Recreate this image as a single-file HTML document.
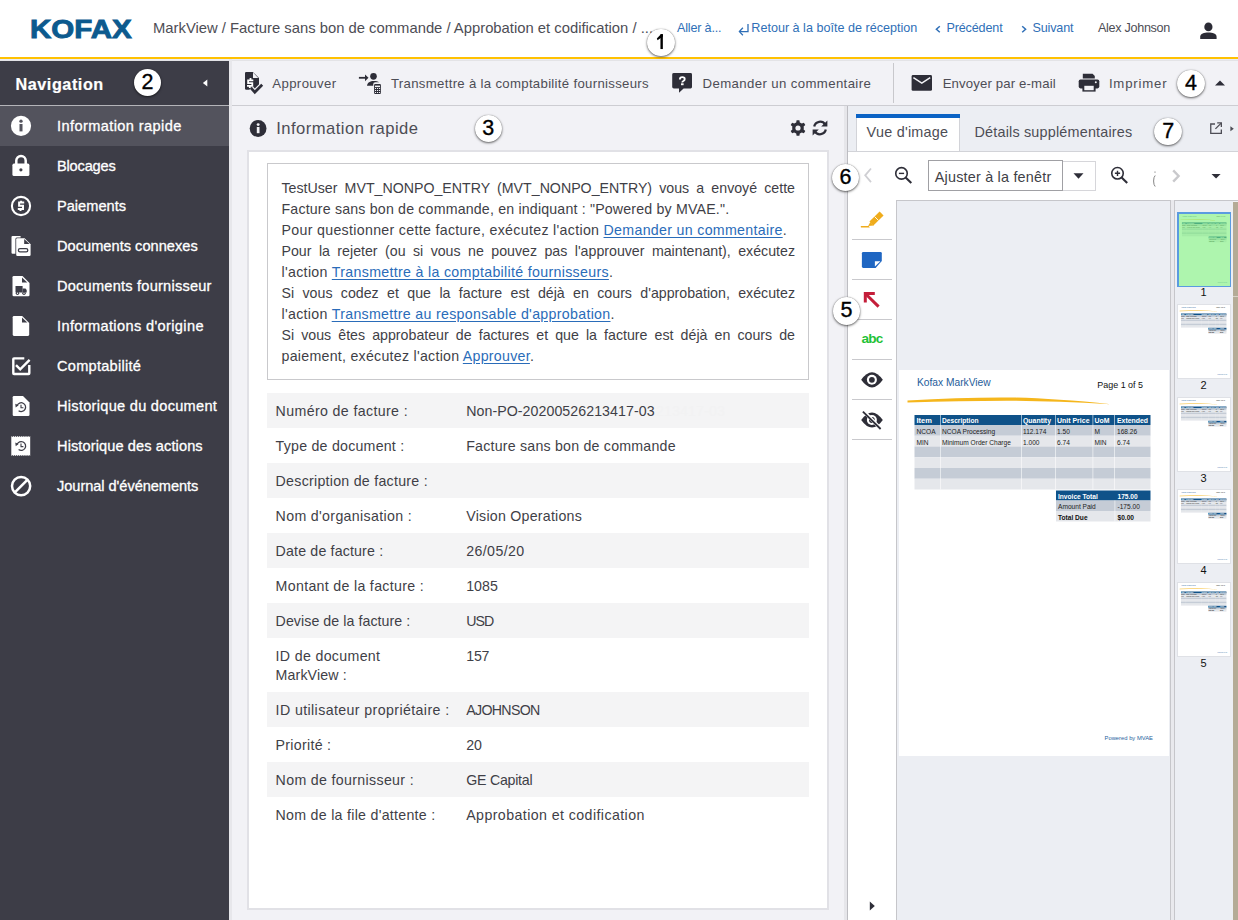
<!DOCTYPE html>
<html><head><meta charset="utf-8"><style>
html,body{margin:0;padding:0;}
body{width:1238px;height:920px;position:relative;overflow:hidden;background:#f2f2f6;font-family:"Liberation Sans", sans-serif;}
body>div{position:absolute;box-sizing:content-box;}
.t{white-space:nowrap;}
.co{background:#fff;border-radius:50%;text-align:center;font-size:21.5px;color:#000;-webkit-text-stroke:0.35px #000;box-shadow:0 1px 2.5px rgba(0,0,0,0.6), 0 0 0.8px rgba(0,0,0,0.45);}
</style></head><body>
<div style="left:0px;top:0px;width:1238px;height:57px;background:#ffffff;"></div>
<svg style="position:absolute;left:30px;top:14px;overflow:visible;" width="104" height="28" viewBox="0 0 104 28"><text x="-0.1" y="23.5" font-family="Liberation Sans" font-weight="700" font-size="26.2" fill="#0c5a8e" stroke="#0c5a8e" stroke-width="0.9" textLength="101.8" lengthAdjust="spacingAndGlyphs">KOFAX</text></svg>
<div class="t" id="t1" style="left:153px;top:20.97px;font-size:14.8px;line-height:14.8px;color:#4d4d55;font-weight:400;letter-spacing:0.003px;">MarkView / Facture sans bon de commande / Approbation et codification / ...</div>
<div class="t" id="t2" style="left:677px;top:21.63px;font-size:12.6px;line-height:12.6px;color:#2f6fb7;font-weight:400;letter-spacing:-0.179px;">Aller à...</div>
<svg style="position:absolute;left:738px;top:22px;overflow:visible;" width="12" height="15" viewBox="0 0 12 15"><path d="M10 2 V9.6 H1.8" fill="none" stroke="#2f6fb7" stroke-width="1.3"/><path d="M4.9 5.8 L1.4 9.6 L4.9 13.2" fill="none" stroke="#2f6fb7" stroke-width="1.3"/></svg>
<div class="t" id="t3" style="left:751.3px;top:21.63px;font-size:12.6px;line-height:12.6px;color:#2f6fb7;font-weight:400;letter-spacing:0.002px;">Retour à la boîte de réception</div>
<svg style="position:absolute;left:934px;top:24px;overflow:visible;" width="8" height="11" viewBox="0 0 8 11"><path d="M5.8 2.3 L2.4 5.3 L5.8 8.3" fill="none" stroke="#2f6fb7" stroke-width="1.5"/></svg>
<div class="t" id="t4" style="left:946.4px;top:21.63px;font-size:12.6px;line-height:12.6px;color:#2f6fb7;font-weight:400;letter-spacing:-0.144px;">Précédent</div>
<svg style="position:absolute;left:1020px;top:24px;overflow:visible;" width="8" height="11" viewBox="0 0 8 11"><path d="M2.2 2.3 L5.6 5.3 L2.2 8.3" fill="none" stroke="#2f6fb7" stroke-width="1.5"/></svg>
<div class="t" id="t5" style="left:1032.5px;top:21.63px;font-size:12.6px;line-height:12.6px;color:#2f6fb7;font-weight:400;letter-spacing:-0.156px;">Suivant</div>
<div class="t" id="t6" style="left:1098px;top:21.63px;font-size:12.6px;line-height:12.6px;color:#4d4d55;font-weight:400;letter-spacing:-0.298px;">Alex Johnson</div>
<svg style="position:absolute;left:1199px;top:22px;overflow:visible;" width="19" height="18" viewBox="0 0 19 18"><ellipse cx="9.4" cy="4.9" rx="4.1" ry="4.3" fill="#2b2b35"/><path d="M1.2 16.9 V14.8 C1.2 11.6 5.2 10.5 9.4 10.5 C13.6 10.5 17.6 11.6 17.6 14.8 V16.9 Z" fill="#2b2b35"/></svg>
<div style="left:0px;top:57px;width:1238px;height:2px;background:#ffc102;"></div>
<div style="left:0px;top:61px;width:229px;height:44px;background:#3d3d47;"></div>
<div class="t" id="t7" style="left:15.5px;top:75.59px;font-size:16.2px;line-height:16.2px;color:#ffffff;font-weight:700;letter-spacing:0.553px;-webkit-text-stroke:0.2px #fff;">Navigation</div>
<svg style="position:absolute;left:202px;top:79px;overflow:visible;" width="6" height="8" viewBox="0 0 6 8"><path d="M5.3 0.6 V7.6 L0.9 4.1 Z" fill="#ffffff"/></svg>
<div style="left:229px;top:59px;width:1009px;height:46px;background:#f2f2f6;"></div>
<div style="left:0px;top:59px;width:1238px;height:1px;background:#e9ecf6;"></div>
<div style="left:0px;top:60px;width:1238px;height:1px;background:#e3e3e6;"></div>
<div style="left:229px;top:59px;width:3px;height:861px;background:#e7e7eb;"></div>
<div style="left:232px;top:105px;width:1006px;height:1px;background:#cdcdd2;"></div>
<div style="left:0px;top:105px;width:229px;height:1px;background:#b4b4b9;"></div>
<svg style="position:absolute;left:240px;top:68px;overflow:visible;" width="30" height="30" viewBox="0 0 30 30"><path d="M6.2 3.9 H12.8 L19 10.1 V21.8 H6.2 Q5 21.8 5 20.6 V5.1 Q5 3.9 6.2 3.9 Z" fill="#2e2e38"/>
<path d="M13 4.6 V9.9 H18.3 Z" fill="#f2f2f6"/>
<path d="M13.3 12.3 H8.1 V15.1 H12.3 V17.9 H7 M10.5 10.1 V12.3 M9.8 17.9 V20.1" fill="none" stroke="#fff" stroke-width="1.8"/>
<path d="M11.1 20.2 L14.8 24.2 L22.2 16.8" fill="none" stroke="#f2f2f6" stroke-width="5.2"/>
<path d="M11.1 20.2 L14.8 24.2 L22.2 16.8" fill="none" stroke="#2e2e38" stroke-width="2.7"/></svg>
<div class="t" id="t8" style="left:272.3px;top:77.13px;font-size:13.2px;line-height:13.2px;color:#4d4d55;font-weight:400;letter-spacing:0.369px;">Approuver</div>
<svg style="position:absolute;left:358px;top:72px;overflow:visible;" width="24" height="23" viewBox="0 0 24 23"><path d="M0.9 5.8 H8" stroke="#2e2e38" stroke-width="1.8"/><path d="M7 2.5 L10.5 5.8 L7 9.2 Z" fill="#2e2e38"/>
<ellipse cx="15.5" cy="4.3" rx="3.3" ry="3.4" fill="#2e2e38"/>
<path d="M9 13.8 C9.4 10.5 12 9 15.8 9 C18.2 9 19.9 9.4 21.2 10.3 H17.2 Q15.2 10.3 15.2 12.3 V13.8 Z" fill="#2e2e38"/>
<rect x="16.1" y="12" width="6.8" height="10.1" rx="1" fill="#2e2e38"/>
<rect x="17" y="13.6" width="5" height="1.5" fill="#f2f2f6"/>
<g fill="#f2f2f6"><rect x="17" y="16" width="1.1" height="1"/><rect x="19" y="16" width="1.1" height="1"/><rect x="21" y="16" width="1.1" height="1"/><rect x="17" y="18" width="1.1" height="1"/><rect x="19" y="18" width="1.1" height="1"/><rect x="21" y="18" width="1.1" height="1"/><rect x="17" y="20" width="1.1" height="1"/><rect x="19" y="20" width="1.1" height="1"/><rect x="21" y="20" width="1.1" height="1"/></g></svg>
<div class="t" id="t9" style="left:391px;top:77.13px;font-size:13.2px;line-height:13.2px;color:#4d4d55;font-weight:400;letter-spacing:0.307px;">Transmettre à la comptabilité fournisseurs</div>
<svg style="position:absolute;left:668px;top:68.4px;overflow:visible;" width="30" height="30" viewBox="0 0 30 30"><path d="M5.9 5 H22.6 Q24 5 24 6.4 V19.1 Q24 20.5 22.6 20.5 H15.6 L11 24.8 V20.5 H5.9 Q4.2 20.5 4.2 19.1 V6.4 Q4.2 5 5.9 5 Z" fill="#2e2e38"/>
<path d="M11.9 11.4 Q11.9 9.1 14.3 9.1 Q16.7 9.1 16.7 11 Q16.7 12.4 15.4 13 Q14.3 13.5 14.3 14.5" fill="none" stroke="#fff" stroke-width="1.9"/>
<rect x="13" y="15.3" width="2.6" height="1.9" fill="#fff"/></svg>
<div class="t" id="t10" style="left:702.6px;top:77.13px;font-size:13.2px;line-height:13.2px;color:#4d4d55;font-weight:400;letter-spacing:0.382px;">Demander un commentaire</div>
<div style="left:893px;top:63px;width:1px;height:40px;background:#c8c8cc;"></div>
<svg style="position:absolute;left:911px;top:74px;overflow:visible;" width="22" height="18" viewBox="0 0 22 18"><rect x="0.6" y="1" width="20.4" height="15.8" rx="1.4" fill="#2e2e38"/><path d="M2.4 3.6 L10.8 9.2 L19.2 3.6" fill="none" stroke="#f2f2f6" stroke-width="1.5"/></svg>
<div class="t" id="t11" style="left:942.7px;top:77.13px;font-size:13.2px;line-height:13.2px;color:#4d4d55;font-weight:400;letter-spacing:0.133px;">Envoyer par e-mail</div>
<svg style="position:absolute;left:1078px;top:73px;overflow:visible;" width="23" height="20" viewBox="0 0 23 20"><path d="M4.8 0.7 H14.6 L16.8 2.9 V5.6 H4.8 Z" fill="#2e2e38"/>
<rect x="0.7" y="6.4" width="20.6" height="9" rx="1.8" fill="#2e2e38"/>
<rect x="4.4" y="11.4" width="13.2" height="7.2" fill="#2e2e38"/>
<rect x="6.3" y="12.8" width="9.4" height="4.4" fill="#f2f2f6"/>
<circle cx="17.8" cy="9.2" r="1" fill="#f2f2f6"/></svg>
<div class="t" id="t12" style="left:1108.9px;top:77.13px;font-size:13.2px;line-height:13.2px;color:#4d4d55;font-weight:400;letter-spacing:0.809px;">Imprimer</div>
<svg style="position:absolute;left:1214px;top:79px;overflow:visible;" width="12" height="8" viewBox="0 0 12 8"><path d="M1 6.5 L6 1.5 L11 6.5 Z" fill="#2e2e38"/></svg>
<div style="left:0px;top:106px;width:229px;height:814px;background:#3d3d47;"></div>
<div style="left:0px;top:106px;width:229px;height:40px;background:#53535d;"></div>
<div class="t" id="t13" style="left:57px;top:118.64px;font-size:14.6px;line-height:14.6px;color:#ffffff;font-weight:400;letter-spacing:0.392px;-webkit-text-stroke:0.3px #fff;">Information rapide</div>
<div class="t" id="t14" style="left:57px;top:158.64px;font-size:14.6px;line-height:14.6px;color:#ffffff;font-weight:400;letter-spacing:-0.180px;-webkit-text-stroke:0.3px #fff;">Blocages</div>
<div class="t" id="t15" style="left:57px;top:198.64px;font-size:14.6px;line-height:14.6px;color:#ffffff;font-weight:400;letter-spacing:0.006px;-webkit-text-stroke:0.3px #fff;">Paiements</div>
<div class="t" id="t16" style="left:57px;top:238.64px;font-size:14.6px;line-height:14.6px;color:#ffffff;font-weight:400;letter-spacing:0.026px;-webkit-text-stroke:0.3px #fff;">Documents connexes</div>
<div class="t" id="t17" style="left:57px;top:278.64px;font-size:14.6px;line-height:14.6px;color:#ffffff;font-weight:400;letter-spacing:0.221px;-webkit-text-stroke:0.3px #fff;">Documents fournisseur</div>
<div class="t" id="t18" style="left:57px;top:318.64px;font-size:14.6px;line-height:14.6px;color:#ffffff;font-weight:400;letter-spacing:0.355px;-webkit-text-stroke:0.3px #fff;">Informations d'origine</div>
<div class="t" id="t19" style="left:57px;top:358.64px;font-size:14.6px;line-height:14.6px;color:#ffffff;font-weight:400;letter-spacing:0.250px;-webkit-text-stroke:0.3px #fff;">Comptabilité</div>
<div class="t" id="t20" style="left:57px;top:398.64px;font-size:14.6px;line-height:14.6px;color:#ffffff;font-weight:400;letter-spacing:0.273px;-webkit-text-stroke:0.3px #fff;">Historique du document</div>
<div class="t" id="t21" style="left:57px;top:438.64px;font-size:14.6px;line-height:14.6px;color:#ffffff;font-weight:400;letter-spacing:0.098px;-webkit-text-stroke:0.3px #fff;">Historique des actions</div>
<div class="t" id="t22" style="left:57px;top:478.64px;font-size:14.6px;line-height:14.6px;color:#ffffff;font-weight:400;letter-spacing:-0.048px;-webkit-text-stroke:0.3px #fff;">Journal d'événements</div>
<svg style="position:absolute;left:10px;top:115px;overflow:visible;" width="22" height="22" viewBox="0 0 22 22"><circle cx="11" cy="10.8" r="10.1" fill="#ffffff"/><rect x="9.5" y="9" width="3" height="7.4" fill="#53535d"/><circle cx="11" cy="6.2" r="1.65" fill="#53535d"/></svg>
<svg style="position:absolute;left:12px;top:154px;overflow:visible;" width="18" height="23" viewBox="0 0 18 23"><path d="M4.3 10 V6.6 A4.7 4.7 0 0 1 13.7 6.6 V10" fill="none" stroke="#ffffff" stroke-width="2.5"/><rect x="0.4" y="9.6" width="17" height="12.5" rx="1.6" fill="#ffffff"/><circle cx="8.9" cy="15.8" r="1.6" fill="#3d3d47"/></svg>
<svg style="position:absolute;left:6px;top:190px;overflow:visible;" width="30" height="30" viewBox="0 0 30 30"><circle cx="15" cy="16" r="9.1" fill="none" stroke="#ffffff" stroke-width="2.1"/><path d="M18.2 12.6 H13.1 V15.8 H17 V19 H11.8 M15.1 10.8 V12.6 M14.5 19 V21" fill="none" stroke="#ffffff" stroke-width="2"/></svg>
<svg style="position:absolute;left:6px;top:230px;overflow:visible;" width="30" height="30" viewBox="0 0 30 30"><path d="M6.6 6 H14.6 V7.6 H10.9 Q9.4 7.6 9.4 9.1 V23.8 H6.6 Q5.5 23.8 5.5 22.7 V7.1 Q5.5 6 6.6 6 Z" fill="#ffffff"/><path d="M11.399999999999999 8.2 H18.6 L24.6 14.2 V24.8 Q24.6 26 23.400000000000002 26 H11.399999999999999 Q10.2 26 10.2 24.8 V9.399999999999999 Q10.2 8.2 11.399999999999999 8.2 Z" fill="#fff"/><path d="M18.2 9 V14.1 H23.6 Z" fill="#3d3d47"/><rect x="12.4" y="18.6" width="9.4" height="3.2" rx="1.6" fill="none" stroke="#3d3d47" stroke-width="1.3"/></svg>
<svg style="position:absolute;left:6px;top:270px;overflow:visible;" width="30" height="30" viewBox="0 0 30 30"><path d="M7.8 6 H16.5 L23.5 13 V25.0 Q23.5 26.3 22.2 26.3 H7.8 Q6.5 26.3 6.5 25.0 V7.3 Q6.5 6 7.8 6 Z" fill="#fff"/><path d="M16 7.6 V12.6 H21.3 Z" fill="#3d3d47"/><rect x="9.5" y="16" width="7.1" height="6.5" fill="#3d3d47"/><path d="M16.6 18.6 H19.5 L20.7 20 V22.5 H16.6 Z" fill="#3d3d47"/><circle cx="11.5" cy="23.3" r="1.7" fill="#3d3d47"/><circle cx="18" cy="23.3" r="1.7" fill="#3d3d47"/><circle cx="11.5" cy="23.3" r="0.7" fill="#ffffff"/><circle cx="18" cy="23.3" r="0.7" fill="#ffffff"/></svg>
<svg style="position:absolute;left:6px;top:310px;overflow:visible;" width="30" height="30" viewBox="0 0 30 30"><path d="M8.0 6 H16.2 L23.2 13 V24.599999999999998 Q23.2 25.9 21.9 25.9 H8.0 Q6.7 25.9 6.7 24.599999999999998 V7.3 Q6.7 6 8.0 6 Z" fill="#fff"/><path d="M16 7.6 V12.6 H21.3 Z" fill="#3d3d47"/></svg>
<svg style="position:absolute;left:6px;top:350px;overflow:visible;" width="30" height="30" viewBox="0 0 30 30"><path d="M18.3 8.4 H8 Q7.3 8.4 7.3 9.1 V23.3 Q7.3 24 8 24 H22.6 Q23.3 24 23.3 23.3 V14.9" fill="none" stroke="#ffffff" stroke-width="2.4"/><path d="M10 15.1 L14.2 19.3 L23.6 9.9" fill="none" stroke="#ffffff" stroke-width="2.4"/></svg>
<svg style="position:absolute;left:6px;top:390px;overflow:visible;" width="30" height="30" viewBox="0 0 30 30"><path d="M8.0 6 H17.0 L23.5 12.5 V24.7 Q23.5 26 22.2 26 H8.0 Q6.7 26 6.7 24.7 V7.3 Q6.7 6 8.0 6 Z" fill="#fff"/><path d="M11.1 15.6 A4.4 4.4 0 1 1 12.6 20.7" fill="none" stroke="#3d3d47" stroke-width="1.25"/><path d="M9.299999999999999 13.799999999999999 L12.6 15.299999999999999 L9.7 17.4 Z" fill="#3d3d47"/><path d="M15.0 14.799999999999999 V17.8 H17.4" fill="none" stroke="#3d3d47" stroke-width="1.1"/></svg>
<svg style="position:absolute;left:6px;top:430px;overflow:visible;" width="30" height="30" viewBox="0 0 30 30"><path d="M5.3 6 L6.35 6.9 L7.4 6 L8.45 6.9 L9.5 6 L10.55 6.9 L11.600000000000001 6 L12.65 6.9 L13.7 6 L14.75 6.9 L15.8 6 L16.85 6.9 L17.900000000000002 6 L18.95 6.9 L20.0 6 L21.05 6.9 L22.1 6 L23.150000000000002 6.9 L24.200000000000003 6 V25.9 L23.15 25 L22.099999999999998 25.9 L21.049999999999997 25 L20.0 25.9 L18.95 25 L17.9 25.9 L16.849999999999998 25 L15.799999999999999 25.9 L14.749999999999998 25 L13.7 25.9 L12.649999999999999 25 L11.599999999999998 25.9 L10.549999999999999 25 L9.499999999999998 25.9 L8.45 25 L7.399999999999999 25.9 L6.349999999999998 25 L5.299999999999997 25.9 Z" fill="#ffffff"/><path d="M11.1 14.4 A4.4 4.4 0 1 1 12.6 19.5" fill="none" stroke="#3d3d47" stroke-width="1.25"/><path d="M9.299999999999999 12.6 L12.6 14.1 L9.7 16.2 Z" fill="#3d3d47"/><path d="M15.0 13.6 V16.6 H17.4" fill="none" stroke="#3d3d47" stroke-width="1.1"/></svg>
<svg style="position:absolute;left:6px;top:471px;overflow:visible;" width="30" height="30" viewBox="0 0 30 30"><circle cx="15.1" cy="15.1" r="9.1" fill="none" stroke="#ffffff" stroke-width="2.5"/><path d="M8.6 21.6 L21.6 8.6" stroke="#ffffff" stroke-width="2.5"/></svg>
<div style="left:232px;top:106px;width:612px;height:814px;background:#f2f2f6;"></div>
<svg style="position:absolute;left:249px;top:119px;overflow:visible;" width="19" height="19" viewBox="0 0 19 19"><circle cx="9.1" cy="9.5" r="8.4" fill="#2e2e38"/><rect x="7.8" y="8" width="2.7" height="6.2" fill="#f2f2f6"/><circle cx="9.15" cy="5.6" r="1.45" fill="#f2f2f6"/></svg>
<div class="t" id="t23" style="left:276.2px;top:120.95px;font-size:16.6px;line-height:16.6px;color:#4d4d55;font-weight:400;letter-spacing:0.477px;">Information rapide</div>
<svg style="position:absolute;left:790px;top:120px;overflow:visible;" width="16" height="16" viewBox="0 0 16 16"><path d="M6.6 0.2 H9.4 L9.8 2.4 Q10.9 2.8 11.8 3.5 L13.9 2.7 L15.3 5.1 L13.6 6.5 Q13.8 7.3 13.8 8 Q13.8 8.7 13.6 9.5 L15.3 10.9 L13.9 13.3 L11.8 12.5 Q10.9 13.2 9.8 13.6 L9.4 15.8 H6.6 L6.2 13.6 Q5.1 13.2 4.2 12.5 L2.1 13.3 L0.7 10.9 L2.4 9.5 Q2.2 8.7 2.2 8 Q2.2 7.3 2.4 6.5 L0.7 5.1 L2.1 2.7 L4.2 3.5 Q5.1 2.8 6.2 2.4 Z" fill="#2e2e38"/><circle cx="8" cy="8" r="2.6" fill="#f2f2f6"/></svg>
<svg style="position:absolute;left:811px;top:119px;overflow:visible;" width="18" height="18" viewBox="0 0 18 18"><path d="M3.2 7.4 A6 6 0 0 1 14.2 5.6" fill="none" stroke="#2e2e38" stroke-width="2.3"/><path d="M16.4 1.4 V7.6 H10.2 Z" fill="#2e2e38"/><path d="M14.8 10.6 A6 6 0 0 1 3.8 12.4" fill="none" stroke="#2e2e38" stroke-width="2.3"/><path d="M1.6 16.6 V10.4 H7.8 Z" fill="#2e2e38"/></svg>
<div style="left:247px;top:150px;width:578px;height:756px;background:#fff;border:2px solid #e1e1e6;"></div>
<div style="left:267px;top:163px;width:540px;height:215px;background:#fff;border:1px solid #c9c9cc;"></div>
<div class="t" style="left:281.5px;top:181.38px;font-size:14.2px;line-height:14.2px;color:#3f3f47;font-weight:400;width:513.5px;text-align:justify;text-align-last:justify;">TestUser MVT_NONPO_ENTRY (MVT_NONPO_ENTRY) vous a envoyé cette</div>
<div class="t" id="t24" style="left:281.5px;top:202.33px;font-size:14.2px;line-height:14.2px;color:#3f3f47;font-weight:400;letter-spacing:0.177px;">Facture sans bon de commande, en indiquant : "Powered by MVAE.".</div>
<div class="t" id="t25" style="left:281.5px;top:223.28px;font-size:14.2px;line-height:14.2px;color:#3f3f47;font-weight:400;letter-spacing:0.314px;">Pour questionner cette facture, exécutez l'action <span style='color:#2a6cb9;text-decoration:underline;text-underline-offset:1.5px;'>Demander un commentaire</span>.</div>
<div class="t" style="left:281.5px;top:244.23px;font-size:14.2px;line-height:14.2px;color:#3f3f47;font-weight:400;width:513.5px;text-align:justify;text-align-last:justify;">Pour la rejeter (ou si vous ne pouvez pas l'approuver maintenant), exécutez</div>
<div class="t" id="t26" style="left:281.5px;top:265.18px;font-size:14.2px;line-height:14.2px;color:#3f3f47;font-weight:400;letter-spacing:0.320px;">l'action <span style='color:#2a6cb9;text-decoration:underline;text-underline-offset:1.5px;'>Transmettre à la comptabilité fournisseurs</span>.</div>
<div class="t" style="left:281.5px;top:286.13px;font-size:14.2px;line-height:14.2px;color:#3f3f47;font-weight:400;width:513.5px;text-align:justify;text-align-last:justify;">Si vous codez et que la facture est déjà en cours d'approbation, exécutez</div>
<div class="t" id="t27" style="left:281.5px;top:307.08px;font-size:14.2px;line-height:14.2px;color:#3f3f47;font-weight:400;letter-spacing:0.310px;">l'action <span style='color:#2a6cb9;text-decoration:underline;text-underline-offset:1.5px;'>Transmettre au responsable d'approbation</span>.</div>
<div class="t" style="left:281.5px;top:328.03px;font-size:14.2px;line-height:14.2px;color:#3f3f47;font-weight:400;width:513.5px;text-align:justify;text-align-last:justify;">Si vous êtes approbateur de factures et que la facture est déjà en cours de</div>
<div class="t" id="t28" style="left:281.5px;top:348.98px;font-size:14.2px;line-height:14.2px;color:#3f3f47;font-weight:400;letter-spacing:0.267px;">paiement, exécutez l'action <span style='color:#2a6cb9;text-decoration:underline;text-underline-offset:1.5px;'>Approuver</span>.</div>
<div style="left:267px;top:393px;width:542px;height:35px;background:#f4f4f5;"></div>
<div class="t" id="t29" style="left:275.6px;top:404.08px;font-size:14.2px;line-height:14.2px;color:#3f3f47;font-weight:400;letter-spacing:0.368px;">Numéro de facture :</div>
<div class="t" id="t30" style="left:466.2px;top:404.08px;font-size:14.2px;line-height:14.2px;color:#3f3f47;font-weight:400;letter-spacing:0.062px;">Non-PO-20200526213417-03</div>
<div class="t" id="t31" style="left:275.6px;top:439.08px;font-size:14.2px;line-height:14.2px;color:#3f3f47;font-weight:400;letter-spacing:0.233px;">Type de document :</div>
<div class="t" id="t32" style="left:466.2px;top:439.08px;font-size:14.2px;line-height:14.2px;color:#3f3f47;font-weight:400;letter-spacing:0.219px;">Facture sans bon de commande</div>
<div style="left:267px;top:463px;width:542px;height:35px;background:#f4f4f5;"></div>
<div class="t" id="t33" style="left:275.6px;top:474.08px;font-size:14.2px;line-height:14.2px;color:#3f3f47;font-weight:400;letter-spacing:0.268px;">Description de facture :</div>
<div class="t" id="t34" style="left:275.6px;top:509.08px;font-size:14.2px;line-height:14.2px;color:#3f3f47;font-weight:400;letter-spacing:0.334px;">Nom d'organisation :</div>
<div class="t" id="t35" style="left:466.2px;top:509.08px;font-size:14.2px;line-height:14.2px;color:#3f3f47;font-weight:400;letter-spacing:0.246px;">Vision Operations</div>
<div style="left:267px;top:533px;width:542px;height:35px;background:#f4f4f5;"></div>
<div class="t" id="t36" style="left:275.6px;top:544.08px;font-size:14.2px;line-height:14.2px;color:#3f3f47;font-weight:400;letter-spacing:0.164px;">Date de facture :</div>
<div class="t" id="t37" style="left:466.2px;top:544.08px;font-size:14.2px;line-height:14.2px;color:#3f3f47;font-weight:400;letter-spacing:0.395px;">26/05/20</div>
<div class="t" id="t38" style="left:275.6px;top:579.08px;font-size:14.2px;line-height:14.2px;color:#3f3f47;font-weight:400;letter-spacing:0.312px;">Montant de la facture :</div>
<div class="t" id="t39" style="left:466.2px;top:579.08px;font-size:14.2px;line-height:14.2px;color:#3f3f47;font-weight:400;letter-spacing:0.039px;">1085</div>
<div style="left:267px;top:603px;width:542px;height:35px;background:#f4f4f5;"></div>
<div class="t" id="t40" style="left:275.6px;top:614.08px;font-size:14.2px;line-height:14.2px;color:#3f3f47;font-weight:400;letter-spacing:0.066px;">Devise de la facture :</div>
<div class="t" id="t41" style="left:466.2px;top:614.08px;font-size:14.2px;line-height:14.2px;color:#3f3f47;font-weight:400;letter-spacing:-0.908px;">USD</div>
<div class="t" id="t42" style="left:275.6px;top:648.58px;font-size:14.2px;line-height:14.2px;color:#3f3f47;font-weight:400;letter-spacing:0.328px;">ID de document</div>
<div class="t" id="t43" style="left:275.6px;top:667.58px;font-size:14.2px;line-height:14.2px;color:#3f3f47;font-weight:400;letter-spacing:0.126px;">MarkView :</div>
<div class="t" id="t44" style="left:466.2px;top:648.58px;font-size:14.2px;line-height:14.2px;color:#3f3f47;font-weight:400;letter-spacing:-0.189px;">157</div>
<div style="left:267px;top:692px;width:542px;height:35px;background:#f4f4f5;"></div>
<div class="t" id="t45" style="left:275.6px;top:703.08px;font-size:14.2px;line-height:14.2px;color:#3f3f47;font-weight:400;letter-spacing:0.395px;">ID utilisateur propriétaire :</div>
<div class="t" id="t46" style="left:466.2px;top:703.08px;font-size:14.2px;line-height:14.2px;color:#3f3f47;font-weight:400;letter-spacing:-0.670px;">AJOHNSON</div>
<div class="t" id="t47" style="left:275.6px;top:738.08px;font-size:14.2px;line-height:14.2px;color:#3f3f47;font-weight:400;letter-spacing:0.292px;">Priorité :</div>
<div class="t" id="t48" style="left:466.2px;top:738.08px;font-size:14.2px;line-height:14.2px;color:#3f3f47;font-weight:400;letter-spacing:-0.054px;">20</div>
<div style="left:267px;top:762px;width:542px;height:35px;background:#f4f4f5;"></div>
<div class="t" id="t49" style="left:275.6px;top:773.08px;font-size:14.2px;line-height:14.2px;color:#3f3f47;font-weight:400;letter-spacing:0.334px;">Nom de fournisseur :</div>
<div class="t" id="t50" style="left:466.2px;top:773.08px;font-size:14.2px;line-height:14.2px;color:#3f3f47;font-weight:400;letter-spacing:-0.243px;">GE Capital</div>
<div class="t" id="t51" style="left:275.6px;top:808.08px;font-size:14.2px;line-height:14.2px;color:#3f3f47;font-weight:400;letter-spacing:0.280px;">Nom de la file d'attente :</div>
<div class="t" id="t52" style="left:466.2px;top:808.08px;font-size:14.2px;line-height:14.2px;color:#3f3f47;font-weight:400;letter-spacing:0.422px;">Approbation et codification</div>
<div class="t" id="t53" style="left:656px;top:404.08px;font-size:14.2px;line-height:14.2px;color:#f2f2f3;font-weight:400;letter-spacing:0.134px;">213417-03</div>
<div style="left:844px;top:106px;width:3px;height:814px;background:#e6e6ea;"></div>
<div style="left:847px;top:106px;width:1px;height:814px;background:#bdbdc2;"></div>
<div style="left:848px;top:106px;width:390px;height:45px;background:#eceef3;"></div>
<div style="left:848px;top:151px;width:390px;height:1px;background:#d2d3d8;"></div>
<div style="left:856px;top:114px;width:102px;height:37px;background:#fff;border-left:1px solid #d2d3d8;border-right:1px solid #d2d3d8;"></div>
<div style="left:856px;top:114px;width:104px;height:4px;background:#0b63c5;"></div>
<div class="t" id="t54" style="left:866.6px;top:124.51px;font-size:14.4px;line-height:14.4px;color:#4d4d55;font-weight:400;letter-spacing:0.246px;">Vue d'image</div>
<div class="t" id="t55" style="left:974.5px;top:124.51px;font-size:14.4px;line-height:14.4px;color:#4d4d55;font-weight:400;letter-spacing:0.188px;">Détails supplémentaires</div>
<svg style="position:absolute;left:1208px;top:122px;overflow:visible;" width="16" height="15" viewBox="0 0 16 15"><path d="M7 2 H2.75 V11.35 H13.35 V7.5" fill="none" stroke="#4d4d55" stroke-width="1.3"/><path d="M9.2 0.95 H13.35 V5.1" fill="none" stroke="#4d4d55" stroke-width="1.3"/><path d="M13.2 1.1 L7.4 6.9" stroke="#4d4d55" stroke-width="1.3"/></svg>
<svg style="position:absolute;left:1229px;top:125px;overflow:visible;" width="6" height="8" viewBox="0 0 6 8"><path d="M1.4 1.2 L4.8 3.7 L1.4 6.2 Z" fill="#4d4d55"/></svg>
<div style="left:848px;top:152px;width:390px;height:48px;background:#ffffff;"></div>
<svg style="position:absolute;left:862px;top:167px;overflow:visible;" width="12" height="17" viewBox="0 0 12 17"><path d="M9 1.5 L3.2 8.3 L9 15.1" fill="none" stroke="#cfcfd3" stroke-width="1.8"/></svg>
<svg style="position:absolute;left:893px;top:166px;overflow:visible;" width="21" height="19" viewBox="0 0 21 19"><circle cx="8.5" cy="7.4" r="5.75" fill="none" stroke="#2e2e38" stroke-width="1.6"/><path d="M12.6 11.5 L18.3 17.1" stroke="#2e2e38" stroke-width="2.1"/><path d="M5.9 7.4 H11.1" stroke="#2e2e38" stroke-width="1.4"/></svg>
<div style="left:928px;top:161px;width:166px;height:28px;background:#fff;border:1px solid #d6d6da;"></div>
<div style="left:928px;top:160px;width:133px;height:29px;background:#fff;border:1px solid #a0a0a4;"></div>
<div class="t" id="t56" style="left:934.8px;top:170.31px;font-size:14.4px;line-height:14.4px;color:#3f3f47;font-weight:400;letter-spacing:0.200px;">Ajuster à la fenêtr</div>
<svg style="position:absolute;left:1072px;top:172px;overflow:visible;" width="13" height="8" viewBox="0 0 13 8"><path d="M1.5 1.2 H11.5 L6.5 6.8 Z" fill="#2e2e38"/></svg>
<svg style="position:absolute;left:1110px;top:166px;overflow:visible;" width="21" height="19" viewBox="0 0 21 19"><circle cx="7.5" cy="7.3" r="5.75" fill="none" stroke="#2e2e38" stroke-width="1.6"/><path d="M11.6 11.4 L17.2 17" stroke="#2e2e38" stroke-width="2.1"/><path d="M4.9 7.3 H10.1 M7.5 4.7 V9.9" stroke="#2e2e38" stroke-width="1.4"/></svg>
<svg style="position:absolute;left:1152px;top:169px;overflow:visible;" width="6" height="18" viewBox="0 0 6 18"><circle cx="3" cy="3" r="0.6" fill="#555"/><path d="M3.2 6.5 Q1.6 8 1.6 12 Q1.6 16 3.2 17.5" fill="none" stroke="#777" stroke-width="0.9"/></svg>
<svg style="position:absolute;left:1170px;top:167px;overflow:visible;" width="12" height="17" viewBox="0 0 12 17"><path d="M3.2 3.3 L8.6 9 L3.2 14.7" fill="none" stroke="#c9c9cc" stroke-width="2.4"/></svg>
<svg style="position:absolute;left:1210px;top:172px;overflow:visible;" width="13" height="8" viewBox="0 0 13 8"><path d="M1.5 2.1 H10.6 L6.05 6.6 Z" fill="#2e2e38"/></svg>
<div style="left:848px;top:200px;width:48px;height:720px;background:#ffffff;"></div>
<div style="left:896px;top:200px;width:1px;height:720px;background:#c6c6ca;"></div>
<div style="left:852px;top:239px;width:40px;height:1px;background:#c9c9cd;"></div>
<div style="left:852px;top:279px;width:40px;height:1px;background:#c9c9cd;"></div>
<div style="left:852px;top:319px;width:40px;height:1px;background:#c9c9cd;"></div>
<div style="left:852px;top:359px;width:40px;height:1px;background:#c9c9cd;"></div>
<div style="left:852px;top:399px;width:40px;height:1px;background:#c9c9cd;"></div>
<div style="left:852px;top:439px;width:40px;height:1px;background:#c9c9cd;"></div>
<svg style="position:absolute;left:852px;top:204px;overflow:visible;" width="40" height="40" viewBox="0 0 40 40"><path d="M19.4 19.6 L29.6 9.4" stroke="#efac1c" stroke-width="5.6" stroke-linejoin="round"/><path d="M22.6 12.6 L26.4 16.4" stroke="#fff" stroke-width="0.9"/><path d="M16.2 22.1 L18.3 17.9 L21.9 21.5 Z" fill="#efac1c"/><path d="M8.8 22.1 H16.8 L17.8 23.6 H9.6 Q8.8 23.6 8.8 22.9 Z" fill="#efac1c"/></svg>
<svg style="position:absolute;left:852px;top:204px;overflow:visible;" width="40" height="70" viewBox="0 0 40 70"><path d="M11.2 47.9 H28.5 Q29.8 47.9 29.8 49.2 V57 L23.6 63.9 H11.2 Q9.9 63.9 9.9 62.6 V49.2 Q9.9 47.9 11.2 47.9 Z" fill="#1f66c2"/><path d="M22.9 57.3 H28.4 L22.9 62.6 Z" fill="#fff"/></svg>
<svg style="position:absolute;left:852px;top:284px;overflow:visible;" width="40" height="30" viewBox="0 0 40 30"><path d="M13.3 18.6 V9.6 H22.8" fill="none" stroke="#c41e3a" stroke-width="3"/><path d="M14 10.3 L26.6 22.6" stroke="#c41e3a" stroke-width="3"/></svg>
<div class="t" id="t57" style="left:861.5px;top:332.09px;font-size:13.6px;line-height:13.6px;color:#1fc238;font-weight:700;letter-spacing:-0.855px;">abc</div>
<svg style="position:absolute;left:852px;top:364px;overflow:visible;" width="40" height="70" viewBox="0 0 40 70"><path d="M9.2 15.8 Q14.5 8.200000000000001 20 8.200000000000001 Q25.5 8.200000000000001 30.8 15.8 Q25.5 23.4 20 23.4 Q14.5 23.4 9.2 15.8 Z" fill="#2e2e38"/><circle cx="19.9" cy="15.8" r="5" fill="#fff"/><circle cx="19.9" cy="15.8" r="2.9" fill="#2e2e38"/><path d="M9.2 56 Q14.5 48.4 20 48.4 Q25.5 48.4 30.8 56 Q25.5 63.6 20 63.6 Q14.5 63.6 9.2 56 Z" fill="#2e2e38"/><circle cx="19.9" cy="56" r="5" fill="#fff"/><circle cx="19.9" cy="56" r="2.9" fill="#2e2e38"/><path d="M11.4 47 L29.4 65.4" stroke="#fff" stroke-width="3.4"/><path d="M10.9 47.6 L28.6 65" stroke="#2e2e38" stroke-width="1.8"/></svg>
<svg style="position:absolute;left:868px;top:900px;overflow:visible;" width="8" height="12" viewBox="0 0 8 12"><path d="M1.8 1.5 L6.8 6 L1.8 10.6 Z" fill="#2e2e38"/></svg>
<div style="left:897px;top:200px;width:274px;height:720px;background:#eceef3;"></div>
<div style="left:896px;top:200px;width:275px;height:1px;background:#c6c6ca;"></div>
<div style="left:1170px;top:200px;width:1px;height:720px;background:#c6c6ca;"></div>
<svg style="position:absolute;left:899px;top:370px" width="270" height="386" viewBox="0 0 270 386"><rect x="0" y="0" width="270" height="386" fill="#fff"/><text x="18" y="16.2" font-family="Liberation Sans" font-size="10.2" font-weight="400" fill="#1f5d9a" textLength="73.7" lengthAdjust="spacingAndGlyphs">Kofax MarkView</text><text x="198.3" y="18.1" font-family="Liberation Sans" font-size="9.6" font-weight="400" fill="#111" textLength="45.7" lengthAdjust="spacingAndGlyphs">Page 1 of 5</text><path d="M8.5 30.5 Q67 27 117 27.6 Q157 28.6 212 34.2 Q157 31.2 117 30.8 Q67 30.6 8.5 32.6 Z" fill="#f5b61c"/><rect x="15.5" y="45" width="236" height="10" fill="#0f5289"/><rect x="15.5" y="55.0" width="236" height="10.75" fill="#c5ccd6"/><rect x="15.5" y="65.75" width="236" height="10.75" fill="#e5e7eb"/><rect x="15.5" y="76.5" width="236" height="10.75" fill="#c5ccd6"/><rect x="15.5" y="87.25" width="236" height="10.75" fill="#e5e7eb"/><rect x="15.5" y="98.0" width="236" height="10.75" fill="#c5ccd6"/><rect x="15.5" y="108.75" width="236" height="10.75" fill="#e5e7eb"/><rect x="41" y="45" width="0.8" height="74.5" fill="#fff" opacity="0.7"/><rect x="122" y="45" width="0.8" height="74.5" fill="#fff" opacity="0.7"/><rect x="156" y="45" width="0.8" height="74.5" fill="#fff" opacity="0.7"/><rect x="193.5" y="45" width="0.8" height="74.5" fill="#fff" opacity="0.7"/><rect x="215" y="45" width="0.8" height="74.5" fill="#fff" opacity="0.7"/><text x="17.5" y="53.2" font-family="Liberation Sans" font-size="6.6" font-weight="700" fill="#fff" textLength="15.5" lengthAdjust="spacingAndGlyphs">Item</text><text x="43" y="53.2" font-family="Liberation Sans" font-size="6.6" font-weight="700" fill="#fff" textLength="36.5" lengthAdjust="spacingAndGlyphs">Description</text><text x="124" y="53.2" font-family="Liberation Sans" font-size="6.6" font-weight="700" fill="#fff" textLength="28" lengthAdjust="spacingAndGlyphs">Quantity</text><text x="158" y="53.2" font-family="Liberation Sans" font-size="6.6" font-weight="700" fill="#fff" textLength="32.5" lengthAdjust="spacingAndGlyphs">Unit Price</text><text x="195.5" y="53.2" font-family="Liberation Sans" font-size="6.6" font-weight="700" fill="#fff" textLength="15" lengthAdjust="spacingAndGlyphs">UoM</text><text x="218" y="53.2" font-family="Liberation Sans" font-size="6.6" font-weight="700" fill="#fff" textLength="31" lengthAdjust="spacingAndGlyphs">Extended</text><text x="17.5" y="63.8" font-family="Liberation Sans" font-size="6.6" font-weight="400" fill="#222">NCOA</text><text x="43" y="63.8" font-family="Liberation Sans" font-size="6.6" font-weight="400" fill="#222">NCOA Processing</text><text x="124" y="63.8" font-family="Liberation Sans" font-size="6.6" font-weight="400" fill="#222">112.174</text><text x="158" y="63.8" font-family="Liberation Sans" font-size="6.6" font-weight="400" fill="#222">1.50</text><text x="195.5" y="63.8" font-family="Liberation Sans" font-size="6.6" font-weight="400" fill="#222">M</text><text x="218" y="63.8" font-family="Liberation Sans" font-size="6.6" font-weight="400" fill="#222">168.26</text><text x="17.5" y="74.5" font-family="Liberation Sans" font-size="6.6" font-weight="400" fill="#222">MIN</text><text x="43" y="74.5" font-family="Liberation Sans" font-size="6.6" font-weight="400" fill="#222">Minimum Order Charge</text><text x="124" y="74.5" font-family="Liberation Sans" font-size="6.6" font-weight="400" fill="#222">1.000</text><text x="158" y="74.5" font-family="Liberation Sans" font-size="6.6" font-weight="400" fill="#222">6.74</text><text x="195.5" y="74.5" font-family="Liberation Sans" font-size="6.6" font-weight="400" fill="#222">MIN</text><text x="218" y="74.5" font-family="Liberation Sans" font-size="6.6" font-weight="400" fill="#222">6.74</text><rect x="157" y="120.5" width="94.5" height="10" fill="#0f5289"/><rect x="157" y="130.5" width="94.5" height="10.5" fill="#c5ccd6"/><rect x="157" y="141" width="94.5" height="10.5" fill="#e5e7eb"/><rect x="215.5" y="130.5" width="0.8" height="21" fill="#fff" opacity="0.7"/><text x="159" y="128.6" font-family="Liberation Sans" font-size="6.6" font-weight="700" fill="#fff">Invoice Total</text><text x="218.5" y="128.6" font-family="Liberation Sans" font-size="6.6" font-weight="700" fill="#fff">175.00</text><text x="159" y="139.2" font-family="Liberation Sans" font-size="6.6" font-weight="400" fill="#222">Amount Paid</text><text x="218.5" y="139.2" font-family="Liberation Sans" font-size="6.6" font-weight="400" fill="#222">-175.00</text><text x="159" y="149.8" font-family="Liberation Sans" font-size="6.6" font-weight="700" fill="#111">Total Due</text><text x="218.5" y="149.8" font-family="Liberation Sans" font-size="6.6" font-weight="700" fill="#111">$0.00</text><text x="205.5" y="369.5" font-family="Liberation Sans" font-size="5.6" font-weight="400" fill="#2a64a0" textLength="48.5" lengthAdjust="spacingAndGlyphs">Powered by MVAE</text></svg>
<div style="left:1171px;top:200px;width:3px;height:720px;background:#e9e9ed;"></div>
<div style="left:1174px;top:200px;width:1px;height:720px;background:#c6c6ca;"></div>
<div style="left:1175px;top:201px;width:58px;height:719px;background:#eceef3;"></div>
<div style="left:1174px;top:200px;width:64px;height:1px;background:#c6c6ca;"></div>
<div style="left:1233px;top:202px;width:5px;height:718px;background:#b4ab96;"></div>
<div style="left:1233px;top:296px;width:5px;height:1px;background:#d9d4c8;"></div>
<div style="left:1177px;top:212px;width:54px;height:75px;background:#5a9be0;"></div>
<svg style="position:absolute;left:1178.5px;top:213.5px" width="51" height="72" viewBox="0 0 270 386" preserveAspectRatio="none"><rect x="0" y="0" width="270" height="386" fill="#fff"/><text x="18" y="16.2" font-family="Liberation Sans" font-size="10.2" font-weight="400" fill="#1f5d9a" textLength="73.7" lengthAdjust="spacingAndGlyphs">Kofax MarkView</text><text x="198.3" y="18.1" font-family="Liberation Sans" font-size="9.6" font-weight="400" fill="#111" textLength="45.7" lengthAdjust="spacingAndGlyphs">Page 1 of 5</text><path d="M8.5 30.5 Q67 27 117 27.6 Q157 28.6 212 34.2 Q157 31.2 117 30.8 Q67 30.6 8.5 32.6 Z" fill="#f5b61c"/><rect x="15.5" y="45" width="236" height="10" fill="#0f5289"/><rect x="15.5" y="55.0" width="236" height="10.75" fill="#c5ccd6"/><rect x="15.5" y="65.75" width="236" height="10.75" fill="#e5e7eb"/><rect x="15.5" y="76.5" width="236" height="10.75" fill="#c5ccd6"/><rect x="15.5" y="87.25" width="236" height="10.75" fill="#e5e7eb"/><rect x="15.5" y="98.0" width="236" height="10.75" fill="#c5ccd6"/><rect x="15.5" y="108.75" width="236" height="10.75" fill="#e5e7eb"/><rect x="41" y="45" width="0.8" height="74.5" fill="#fff" opacity="0.7"/><rect x="122" y="45" width="0.8" height="74.5" fill="#fff" opacity="0.7"/><rect x="156" y="45" width="0.8" height="74.5" fill="#fff" opacity="0.7"/><rect x="193.5" y="45" width="0.8" height="74.5" fill="#fff" opacity="0.7"/><rect x="215" y="45" width="0.8" height="74.5" fill="#fff" opacity="0.7"/><text x="17.5" y="53.2" font-family="Liberation Sans" font-size="6.6" font-weight="700" fill="#fff" textLength="15.5" lengthAdjust="spacingAndGlyphs">Item</text><text x="43" y="53.2" font-family="Liberation Sans" font-size="6.6" font-weight="700" fill="#fff" textLength="36.5" lengthAdjust="spacingAndGlyphs">Description</text><text x="124" y="53.2" font-family="Liberation Sans" font-size="6.6" font-weight="700" fill="#fff" textLength="28" lengthAdjust="spacingAndGlyphs">Quantity</text><text x="158" y="53.2" font-family="Liberation Sans" font-size="6.6" font-weight="700" fill="#fff" textLength="32.5" lengthAdjust="spacingAndGlyphs">Unit Price</text><text x="195.5" y="53.2" font-family="Liberation Sans" font-size="6.6" font-weight="700" fill="#fff" textLength="15" lengthAdjust="spacingAndGlyphs">UoM</text><text x="218" y="53.2" font-family="Liberation Sans" font-size="6.6" font-weight="700" fill="#fff" textLength="31" lengthAdjust="spacingAndGlyphs">Extended</text><text x="17.5" y="63.8" font-family="Liberation Sans" font-size="6.6" font-weight="400" fill="#222">NCOA</text><text x="43" y="63.8" font-family="Liberation Sans" font-size="6.6" font-weight="400" fill="#222">NCOA Processing</text><text x="124" y="63.8" font-family="Liberation Sans" font-size="6.6" font-weight="400" fill="#222">112.174</text><text x="158" y="63.8" font-family="Liberation Sans" font-size="6.6" font-weight="400" fill="#222">1.50</text><text x="195.5" y="63.8" font-family="Liberation Sans" font-size="6.6" font-weight="400" fill="#222">M</text><text x="218" y="63.8" font-family="Liberation Sans" font-size="6.6" font-weight="400" fill="#222">168.26</text><text x="17.5" y="74.5" font-family="Liberation Sans" font-size="6.6" font-weight="400" fill="#222">MIN</text><text x="43" y="74.5" font-family="Liberation Sans" font-size="6.6" font-weight="400" fill="#222">Minimum Order Charge</text><text x="124" y="74.5" font-family="Liberation Sans" font-size="6.6" font-weight="400" fill="#222">1.000</text><text x="158" y="74.5" font-family="Liberation Sans" font-size="6.6" font-weight="400" fill="#222">6.74</text><text x="195.5" y="74.5" font-family="Liberation Sans" font-size="6.6" font-weight="400" fill="#222">MIN</text><text x="218" y="74.5" font-family="Liberation Sans" font-size="6.6" font-weight="400" fill="#222">6.74</text><rect x="157" y="120.5" width="94.5" height="10" fill="#0f5289"/><rect x="157" y="130.5" width="94.5" height="10.5" fill="#c5ccd6"/><rect x="157" y="141" width="94.5" height="10.5" fill="#e5e7eb"/><rect x="215.5" y="130.5" width="0.8" height="21" fill="#fff" opacity="0.7"/><text x="159" y="128.6" font-family="Liberation Sans" font-size="6.6" font-weight="700" fill="#fff">Invoice Total</text><text x="218.5" y="128.6" font-family="Liberation Sans" font-size="6.6" font-weight="700" fill="#fff">175.00</text><text x="159" y="139.2" font-family="Liberation Sans" font-size="6.6" font-weight="400" fill="#222">Amount Paid</text><text x="218.5" y="139.2" font-family="Liberation Sans" font-size="6.6" font-weight="400" fill="#222">-175.00</text><text x="159" y="149.8" font-family="Liberation Sans" font-size="6.6" font-weight="700" fill="#111">Total Due</text><text x="218.5" y="149.8" font-family="Liberation Sans" font-size="6.6" font-weight="700" fill="#111">$0.00</text><text x="205.5" y="369.5" font-family="Liberation Sans" font-size="5.6" font-weight="400" fill="#2a64a0" textLength="48.5" lengthAdjust="spacingAndGlyphs">Powered by MVAE</text><rect x="0" y="0" width="270" height="386" fill="#78ee78" opacity="0.6"/></svg>
<div class="t" style="left:1200.5px;top:287.09px;font-size:11px;line-height:11px;color:#111;font-weight:400;">1</div>
<div style="left:1178px;top:305.0px;width:52px;height:73px;background:#ffffff;box-shadow:0 0 0 1px #dfe1e6;"></div>
<svg style="position:absolute;left:1178px;top:305.0px" width="52" height="73" viewBox="0 0 270 386" preserveAspectRatio="none"><rect x="0" y="0" width="270" height="386" fill="#fff"/><text x="18" y="16.2" font-family="Liberation Sans" font-size="10.2" font-weight="400" fill="#1f5d9a" textLength="73.7" lengthAdjust="spacingAndGlyphs">Kofax MarkView</text><text x="198.3" y="18.1" font-family="Liberation Sans" font-size="9.6" font-weight="400" fill="#111" textLength="45.7" lengthAdjust="spacingAndGlyphs">Page 1 of 5</text><path d="M8.5 30.5 Q67 27 117 27.6 Q157 28.6 212 34.2 Q157 31.2 117 30.8 Q67 30.6 8.5 32.6 Z" fill="#f5b61c"/><rect x="15.5" y="45" width="236" height="10" fill="#0f5289"/><rect x="15.5" y="55.0" width="236" height="10.75" fill="#c5ccd6"/><rect x="15.5" y="65.75" width="236" height="10.75" fill="#e5e7eb"/><rect x="15.5" y="76.5" width="236" height="10.75" fill="#c5ccd6"/><rect x="15.5" y="87.25" width="236" height="10.75" fill="#e5e7eb"/><rect x="15.5" y="98.0" width="236" height="10.75" fill="#c5ccd6"/><rect x="15.5" y="108.75" width="236" height="10.75" fill="#e5e7eb"/><rect x="41" y="45" width="0.8" height="74.5" fill="#fff" opacity="0.7"/><rect x="122" y="45" width="0.8" height="74.5" fill="#fff" opacity="0.7"/><rect x="156" y="45" width="0.8" height="74.5" fill="#fff" opacity="0.7"/><rect x="193.5" y="45" width="0.8" height="74.5" fill="#fff" opacity="0.7"/><rect x="215" y="45" width="0.8" height="74.5" fill="#fff" opacity="0.7"/><text x="17.5" y="53.2" font-family="Liberation Sans" font-size="6.6" font-weight="700" fill="#fff" textLength="15.5" lengthAdjust="spacingAndGlyphs">Item</text><text x="43" y="53.2" font-family="Liberation Sans" font-size="6.6" font-weight="700" fill="#fff" textLength="36.5" lengthAdjust="spacingAndGlyphs">Description</text><text x="124" y="53.2" font-family="Liberation Sans" font-size="6.6" font-weight="700" fill="#fff" textLength="28" lengthAdjust="spacingAndGlyphs">Quantity</text><text x="158" y="53.2" font-family="Liberation Sans" font-size="6.6" font-weight="700" fill="#fff" textLength="32.5" lengthAdjust="spacingAndGlyphs">Unit Price</text><text x="195.5" y="53.2" font-family="Liberation Sans" font-size="6.6" font-weight="700" fill="#fff" textLength="15" lengthAdjust="spacingAndGlyphs">UoM</text><text x="218" y="53.2" font-family="Liberation Sans" font-size="6.6" font-weight="700" fill="#fff" textLength="31" lengthAdjust="spacingAndGlyphs">Extended</text><text x="17.5" y="63.8" font-family="Liberation Sans" font-size="6.6" font-weight="400" fill="#222">NCOA</text><text x="43" y="63.8" font-family="Liberation Sans" font-size="6.6" font-weight="400" fill="#222">NCOA Processing</text><text x="124" y="63.8" font-family="Liberation Sans" font-size="6.6" font-weight="400" fill="#222">112.174</text><text x="158" y="63.8" font-family="Liberation Sans" font-size="6.6" font-weight="400" fill="#222">1.50</text><text x="195.5" y="63.8" font-family="Liberation Sans" font-size="6.6" font-weight="400" fill="#222">M</text><text x="218" y="63.8" font-family="Liberation Sans" font-size="6.6" font-weight="400" fill="#222">168.26</text><text x="17.5" y="74.5" font-family="Liberation Sans" font-size="6.6" font-weight="400" fill="#222">MIN</text><text x="43" y="74.5" font-family="Liberation Sans" font-size="6.6" font-weight="400" fill="#222">Minimum Order Charge</text><text x="124" y="74.5" font-family="Liberation Sans" font-size="6.6" font-weight="400" fill="#222">1.000</text><text x="158" y="74.5" font-family="Liberation Sans" font-size="6.6" font-weight="400" fill="#222">6.74</text><text x="195.5" y="74.5" font-family="Liberation Sans" font-size="6.6" font-weight="400" fill="#222">MIN</text><text x="218" y="74.5" font-family="Liberation Sans" font-size="6.6" font-weight="400" fill="#222">6.74</text><rect x="157" y="120.5" width="94.5" height="10" fill="#0f5289"/><rect x="157" y="130.5" width="94.5" height="10.5" fill="#c5ccd6"/><rect x="157" y="141" width="94.5" height="10.5" fill="#e5e7eb"/><rect x="215.5" y="130.5" width="0.8" height="21" fill="#fff" opacity="0.7"/><text x="159" y="128.6" font-family="Liberation Sans" font-size="6.6" font-weight="700" fill="#fff">Invoice Total</text><text x="218.5" y="128.6" font-family="Liberation Sans" font-size="6.6" font-weight="700" fill="#fff">175.00</text><text x="159" y="139.2" font-family="Liberation Sans" font-size="6.6" font-weight="400" fill="#222">Amount Paid</text><text x="218.5" y="139.2" font-family="Liberation Sans" font-size="6.6" font-weight="400" fill="#222">-175.00</text><text x="159" y="149.8" font-family="Liberation Sans" font-size="6.6" font-weight="700" fill="#111">Total Due</text><text x="218.5" y="149.8" font-family="Liberation Sans" font-size="6.6" font-weight="700" fill="#111">$0.00</text><text x="205.5" y="369.5" font-family="Liberation Sans" font-size="5.6" font-weight="400" fill="#2a64a0" textLength="48.5" lengthAdjust="spacingAndGlyphs">Powered by MVAE</text></svg>
<div class="t" style="left:1200.5px;top:380.19px;font-size:11px;line-height:11px;color:#111;font-weight:400;">2</div>
<div style="left:1178px;top:397.5px;width:52px;height:73px;background:#ffffff;box-shadow:0 0 0 1px #dfe1e6;"></div>
<svg style="position:absolute;left:1178px;top:397.5px" width="52" height="73" viewBox="0 0 270 386" preserveAspectRatio="none"><rect x="0" y="0" width="270" height="386" fill="#fff"/><text x="18" y="16.2" font-family="Liberation Sans" font-size="10.2" font-weight="400" fill="#1f5d9a" textLength="73.7" lengthAdjust="spacingAndGlyphs">Kofax MarkView</text><text x="198.3" y="18.1" font-family="Liberation Sans" font-size="9.6" font-weight="400" fill="#111" textLength="45.7" lengthAdjust="spacingAndGlyphs">Page 1 of 5</text><path d="M8.5 30.5 Q67 27 117 27.6 Q157 28.6 212 34.2 Q157 31.2 117 30.8 Q67 30.6 8.5 32.6 Z" fill="#f5b61c"/><rect x="15.5" y="45" width="236" height="10" fill="#0f5289"/><rect x="15.5" y="55.0" width="236" height="10.75" fill="#c5ccd6"/><rect x="15.5" y="65.75" width="236" height="10.75" fill="#e5e7eb"/><rect x="15.5" y="76.5" width="236" height="10.75" fill="#c5ccd6"/><rect x="15.5" y="87.25" width="236" height="10.75" fill="#e5e7eb"/><rect x="15.5" y="98.0" width="236" height="10.75" fill="#c5ccd6"/><rect x="15.5" y="108.75" width="236" height="10.75" fill="#e5e7eb"/><rect x="41" y="45" width="0.8" height="74.5" fill="#fff" opacity="0.7"/><rect x="122" y="45" width="0.8" height="74.5" fill="#fff" opacity="0.7"/><rect x="156" y="45" width="0.8" height="74.5" fill="#fff" opacity="0.7"/><rect x="193.5" y="45" width="0.8" height="74.5" fill="#fff" opacity="0.7"/><rect x="215" y="45" width="0.8" height="74.5" fill="#fff" opacity="0.7"/><text x="17.5" y="53.2" font-family="Liberation Sans" font-size="6.6" font-weight="700" fill="#fff" textLength="15.5" lengthAdjust="spacingAndGlyphs">Item</text><text x="43" y="53.2" font-family="Liberation Sans" font-size="6.6" font-weight="700" fill="#fff" textLength="36.5" lengthAdjust="spacingAndGlyphs">Description</text><text x="124" y="53.2" font-family="Liberation Sans" font-size="6.6" font-weight="700" fill="#fff" textLength="28" lengthAdjust="spacingAndGlyphs">Quantity</text><text x="158" y="53.2" font-family="Liberation Sans" font-size="6.6" font-weight="700" fill="#fff" textLength="32.5" lengthAdjust="spacingAndGlyphs">Unit Price</text><text x="195.5" y="53.2" font-family="Liberation Sans" font-size="6.6" font-weight="700" fill="#fff" textLength="15" lengthAdjust="spacingAndGlyphs">UoM</text><text x="218" y="53.2" font-family="Liberation Sans" font-size="6.6" font-weight="700" fill="#fff" textLength="31" lengthAdjust="spacingAndGlyphs">Extended</text><text x="17.5" y="63.8" font-family="Liberation Sans" font-size="6.6" font-weight="400" fill="#222">NCOA</text><text x="43" y="63.8" font-family="Liberation Sans" font-size="6.6" font-weight="400" fill="#222">NCOA Processing</text><text x="124" y="63.8" font-family="Liberation Sans" font-size="6.6" font-weight="400" fill="#222">112.174</text><text x="158" y="63.8" font-family="Liberation Sans" font-size="6.6" font-weight="400" fill="#222">1.50</text><text x="195.5" y="63.8" font-family="Liberation Sans" font-size="6.6" font-weight="400" fill="#222">M</text><text x="218" y="63.8" font-family="Liberation Sans" font-size="6.6" font-weight="400" fill="#222">168.26</text><text x="17.5" y="74.5" font-family="Liberation Sans" font-size="6.6" font-weight="400" fill="#222">MIN</text><text x="43" y="74.5" font-family="Liberation Sans" font-size="6.6" font-weight="400" fill="#222">Minimum Order Charge</text><text x="124" y="74.5" font-family="Liberation Sans" font-size="6.6" font-weight="400" fill="#222">1.000</text><text x="158" y="74.5" font-family="Liberation Sans" font-size="6.6" font-weight="400" fill="#222">6.74</text><text x="195.5" y="74.5" font-family="Liberation Sans" font-size="6.6" font-weight="400" fill="#222">MIN</text><text x="218" y="74.5" font-family="Liberation Sans" font-size="6.6" font-weight="400" fill="#222">6.74</text><rect x="157" y="120.5" width="94.5" height="10" fill="#0f5289"/><rect x="157" y="130.5" width="94.5" height="10.5" fill="#c5ccd6"/><rect x="157" y="141" width="94.5" height="10.5" fill="#e5e7eb"/><rect x="215.5" y="130.5" width="0.8" height="21" fill="#fff" opacity="0.7"/><text x="159" y="128.6" font-family="Liberation Sans" font-size="6.6" font-weight="700" fill="#fff">Invoice Total</text><text x="218.5" y="128.6" font-family="Liberation Sans" font-size="6.6" font-weight="700" fill="#fff">175.00</text><text x="159" y="139.2" font-family="Liberation Sans" font-size="6.6" font-weight="400" fill="#222">Amount Paid</text><text x="218.5" y="139.2" font-family="Liberation Sans" font-size="6.6" font-weight="400" fill="#222">-175.00</text><text x="159" y="149.8" font-family="Liberation Sans" font-size="6.6" font-weight="700" fill="#111">Total Due</text><text x="218.5" y="149.8" font-family="Liberation Sans" font-size="6.6" font-weight="700" fill="#111">$0.00</text><text x="205.5" y="369.5" font-family="Liberation Sans" font-size="5.6" font-weight="400" fill="#2a64a0" textLength="48.5" lengthAdjust="spacingAndGlyphs">Powered by MVAE</text></svg>
<div class="t" style="left:1200.5px;top:472.69px;font-size:11px;line-height:11px;color:#111;font-weight:400;">3</div>
<div style="left:1178px;top:490.0px;width:52px;height:73px;background:#ffffff;box-shadow:0 0 0 1px #dfe1e6;"></div>
<svg style="position:absolute;left:1178px;top:490.0px" width="52" height="73" viewBox="0 0 270 386" preserveAspectRatio="none"><rect x="0" y="0" width="270" height="386" fill="#fff"/><text x="18" y="16.2" font-family="Liberation Sans" font-size="10.2" font-weight="400" fill="#1f5d9a" textLength="73.7" lengthAdjust="spacingAndGlyphs">Kofax MarkView</text><text x="198.3" y="18.1" font-family="Liberation Sans" font-size="9.6" font-weight="400" fill="#111" textLength="45.7" lengthAdjust="spacingAndGlyphs">Page 1 of 5</text><path d="M8.5 30.5 Q67 27 117 27.6 Q157 28.6 212 34.2 Q157 31.2 117 30.8 Q67 30.6 8.5 32.6 Z" fill="#f5b61c"/><rect x="15.5" y="45" width="236" height="10" fill="#0f5289"/><rect x="15.5" y="55.0" width="236" height="10.75" fill="#c5ccd6"/><rect x="15.5" y="65.75" width="236" height="10.75" fill="#e5e7eb"/><rect x="15.5" y="76.5" width="236" height="10.75" fill="#c5ccd6"/><rect x="15.5" y="87.25" width="236" height="10.75" fill="#e5e7eb"/><rect x="15.5" y="98.0" width="236" height="10.75" fill="#c5ccd6"/><rect x="15.5" y="108.75" width="236" height="10.75" fill="#e5e7eb"/><rect x="41" y="45" width="0.8" height="74.5" fill="#fff" opacity="0.7"/><rect x="122" y="45" width="0.8" height="74.5" fill="#fff" opacity="0.7"/><rect x="156" y="45" width="0.8" height="74.5" fill="#fff" opacity="0.7"/><rect x="193.5" y="45" width="0.8" height="74.5" fill="#fff" opacity="0.7"/><rect x="215" y="45" width="0.8" height="74.5" fill="#fff" opacity="0.7"/><text x="17.5" y="53.2" font-family="Liberation Sans" font-size="6.6" font-weight="700" fill="#fff" textLength="15.5" lengthAdjust="spacingAndGlyphs">Item</text><text x="43" y="53.2" font-family="Liberation Sans" font-size="6.6" font-weight="700" fill="#fff" textLength="36.5" lengthAdjust="spacingAndGlyphs">Description</text><text x="124" y="53.2" font-family="Liberation Sans" font-size="6.6" font-weight="700" fill="#fff" textLength="28" lengthAdjust="spacingAndGlyphs">Quantity</text><text x="158" y="53.2" font-family="Liberation Sans" font-size="6.6" font-weight="700" fill="#fff" textLength="32.5" lengthAdjust="spacingAndGlyphs">Unit Price</text><text x="195.5" y="53.2" font-family="Liberation Sans" font-size="6.6" font-weight="700" fill="#fff" textLength="15" lengthAdjust="spacingAndGlyphs">UoM</text><text x="218" y="53.2" font-family="Liberation Sans" font-size="6.6" font-weight="700" fill="#fff" textLength="31" lengthAdjust="spacingAndGlyphs">Extended</text><text x="17.5" y="63.8" font-family="Liberation Sans" font-size="6.6" font-weight="400" fill="#222">NCOA</text><text x="43" y="63.8" font-family="Liberation Sans" font-size="6.6" font-weight="400" fill="#222">NCOA Processing</text><text x="124" y="63.8" font-family="Liberation Sans" font-size="6.6" font-weight="400" fill="#222">112.174</text><text x="158" y="63.8" font-family="Liberation Sans" font-size="6.6" font-weight="400" fill="#222">1.50</text><text x="195.5" y="63.8" font-family="Liberation Sans" font-size="6.6" font-weight="400" fill="#222">M</text><text x="218" y="63.8" font-family="Liberation Sans" font-size="6.6" font-weight="400" fill="#222">168.26</text><text x="17.5" y="74.5" font-family="Liberation Sans" font-size="6.6" font-weight="400" fill="#222">MIN</text><text x="43" y="74.5" font-family="Liberation Sans" font-size="6.6" font-weight="400" fill="#222">Minimum Order Charge</text><text x="124" y="74.5" font-family="Liberation Sans" font-size="6.6" font-weight="400" fill="#222">1.000</text><text x="158" y="74.5" font-family="Liberation Sans" font-size="6.6" font-weight="400" fill="#222">6.74</text><text x="195.5" y="74.5" font-family="Liberation Sans" font-size="6.6" font-weight="400" fill="#222">MIN</text><text x="218" y="74.5" font-family="Liberation Sans" font-size="6.6" font-weight="400" fill="#222">6.74</text><rect x="157" y="120.5" width="94.5" height="10" fill="#0f5289"/><rect x="157" y="130.5" width="94.5" height="10.5" fill="#c5ccd6"/><rect x="157" y="141" width="94.5" height="10.5" fill="#e5e7eb"/><rect x="215.5" y="130.5" width="0.8" height="21" fill="#fff" opacity="0.7"/><text x="159" y="128.6" font-family="Liberation Sans" font-size="6.6" font-weight="700" fill="#fff">Invoice Total</text><text x="218.5" y="128.6" font-family="Liberation Sans" font-size="6.6" font-weight="700" fill="#fff">175.00</text><text x="159" y="139.2" font-family="Liberation Sans" font-size="6.6" font-weight="400" fill="#222">Amount Paid</text><text x="218.5" y="139.2" font-family="Liberation Sans" font-size="6.6" font-weight="400" fill="#222">-175.00</text><text x="159" y="149.8" font-family="Liberation Sans" font-size="6.6" font-weight="700" fill="#111">Total Due</text><text x="218.5" y="149.8" font-family="Liberation Sans" font-size="6.6" font-weight="700" fill="#111">$0.00</text><text x="205.5" y="369.5" font-family="Liberation Sans" font-size="5.6" font-weight="400" fill="#2a64a0" textLength="48.5" lengthAdjust="spacingAndGlyphs">Powered by MVAE</text></svg>
<div class="t" style="left:1200.5px;top:565.19px;font-size:11px;line-height:11px;color:#111;font-weight:400;">4</div>
<div style="left:1178px;top:582.5px;width:52px;height:73px;background:#ffffff;box-shadow:0 0 0 1px #dfe1e6;"></div>
<svg style="position:absolute;left:1178px;top:582.5px" width="52" height="73" viewBox="0 0 270 386" preserveAspectRatio="none"><rect x="0" y="0" width="270" height="386" fill="#fff"/><text x="18" y="16.2" font-family="Liberation Sans" font-size="10.2" font-weight="400" fill="#1f5d9a" textLength="73.7" lengthAdjust="spacingAndGlyphs">Kofax MarkView</text><text x="198.3" y="18.1" font-family="Liberation Sans" font-size="9.6" font-weight="400" fill="#111" textLength="45.7" lengthAdjust="spacingAndGlyphs">Page 1 of 5</text><path d="M8.5 30.5 Q67 27 117 27.6 Q157 28.6 212 34.2 Q157 31.2 117 30.8 Q67 30.6 8.5 32.6 Z" fill="#f5b61c"/><rect x="15.5" y="45" width="236" height="10" fill="#0f5289"/><rect x="15.5" y="55.0" width="236" height="10.75" fill="#c5ccd6"/><rect x="15.5" y="65.75" width="236" height="10.75" fill="#e5e7eb"/><rect x="15.5" y="76.5" width="236" height="10.75" fill="#c5ccd6"/><rect x="15.5" y="87.25" width="236" height="10.75" fill="#e5e7eb"/><rect x="15.5" y="98.0" width="236" height="10.75" fill="#c5ccd6"/><rect x="15.5" y="108.75" width="236" height="10.75" fill="#e5e7eb"/><rect x="41" y="45" width="0.8" height="74.5" fill="#fff" opacity="0.7"/><rect x="122" y="45" width="0.8" height="74.5" fill="#fff" opacity="0.7"/><rect x="156" y="45" width="0.8" height="74.5" fill="#fff" opacity="0.7"/><rect x="193.5" y="45" width="0.8" height="74.5" fill="#fff" opacity="0.7"/><rect x="215" y="45" width="0.8" height="74.5" fill="#fff" opacity="0.7"/><text x="17.5" y="53.2" font-family="Liberation Sans" font-size="6.6" font-weight="700" fill="#fff" textLength="15.5" lengthAdjust="spacingAndGlyphs">Item</text><text x="43" y="53.2" font-family="Liberation Sans" font-size="6.6" font-weight="700" fill="#fff" textLength="36.5" lengthAdjust="spacingAndGlyphs">Description</text><text x="124" y="53.2" font-family="Liberation Sans" font-size="6.6" font-weight="700" fill="#fff" textLength="28" lengthAdjust="spacingAndGlyphs">Quantity</text><text x="158" y="53.2" font-family="Liberation Sans" font-size="6.6" font-weight="700" fill="#fff" textLength="32.5" lengthAdjust="spacingAndGlyphs">Unit Price</text><text x="195.5" y="53.2" font-family="Liberation Sans" font-size="6.6" font-weight="700" fill="#fff" textLength="15" lengthAdjust="spacingAndGlyphs">UoM</text><text x="218" y="53.2" font-family="Liberation Sans" font-size="6.6" font-weight="700" fill="#fff" textLength="31" lengthAdjust="spacingAndGlyphs">Extended</text><text x="17.5" y="63.8" font-family="Liberation Sans" font-size="6.6" font-weight="400" fill="#222">NCOA</text><text x="43" y="63.8" font-family="Liberation Sans" font-size="6.6" font-weight="400" fill="#222">NCOA Processing</text><text x="124" y="63.8" font-family="Liberation Sans" font-size="6.6" font-weight="400" fill="#222">112.174</text><text x="158" y="63.8" font-family="Liberation Sans" font-size="6.6" font-weight="400" fill="#222">1.50</text><text x="195.5" y="63.8" font-family="Liberation Sans" font-size="6.6" font-weight="400" fill="#222">M</text><text x="218" y="63.8" font-family="Liberation Sans" font-size="6.6" font-weight="400" fill="#222">168.26</text><text x="17.5" y="74.5" font-family="Liberation Sans" font-size="6.6" font-weight="400" fill="#222">MIN</text><text x="43" y="74.5" font-family="Liberation Sans" font-size="6.6" font-weight="400" fill="#222">Minimum Order Charge</text><text x="124" y="74.5" font-family="Liberation Sans" font-size="6.6" font-weight="400" fill="#222">1.000</text><text x="158" y="74.5" font-family="Liberation Sans" font-size="6.6" font-weight="400" fill="#222">6.74</text><text x="195.5" y="74.5" font-family="Liberation Sans" font-size="6.6" font-weight="400" fill="#222">MIN</text><text x="218" y="74.5" font-family="Liberation Sans" font-size="6.6" font-weight="400" fill="#222">6.74</text><rect x="157" y="120.5" width="94.5" height="10" fill="#0f5289"/><rect x="157" y="130.5" width="94.5" height="10.5" fill="#c5ccd6"/><rect x="157" y="141" width="94.5" height="10.5" fill="#e5e7eb"/><rect x="215.5" y="130.5" width="0.8" height="21" fill="#fff" opacity="0.7"/><text x="159" y="128.6" font-family="Liberation Sans" font-size="6.6" font-weight="700" fill="#fff">Invoice Total</text><text x="218.5" y="128.6" font-family="Liberation Sans" font-size="6.6" font-weight="700" fill="#fff">175.00</text><text x="159" y="139.2" font-family="Liberation Sans" font-size="6.6" font-weight="400" fill="#222">Amount Paid</text><text x="218.5" y="139.2" font-family="Liberation Sans" font-size="6.6" font-weight="400" fill="#222">-175.00</text><text x="159" y="149.8" font-family="Liberation Sans" font-size="6.6" font-weight="700" fill="#111">Total Due</text><text x="218.5" y="149.8" font-family="Liberation Sans" font-size="6.6" font-weight="700" fill="#111">$0.00</text><text x="205.5" y="369.5" font-family="Liberation Sans" font-size="5.6" font-weight="400" fill="#2a64a0" textLength="48.5" lengthAdjust="spacingAndGlyphs">Powered by MVAE</text></svg>
<div class="t" style="left:1200.5px;top:657.69px;font-size:11px;line-height:11px;color:#111;font-weight:400;">5</div>
<div class="co" style="left:647.25px;top:28.75px;width:27.5px;height:27.5px;"><svg width="27.5" height="27.5" style="position:absolute;left:0;top:0"><rect x="13.45" y="5.15" width="2.4" height="14.9" fill="#000"/><path d="M9.85 9.45 L13.95 5.15 H15.85 V7.55 L10.55 11.15 Z" fill="#000"/></svg></div>
<div class="co" style="left:133.75px;top:68.75px;width:27.5px;height:27.5px;line-height:27.3px;">2</div>
<div class="co" style="left:474.55px;top:114.65px;width:27.5px;height:27.5px;line-height:27.3px;">3</div>
<div class="co" style="left:1177.25px;top:69.75px;width:27.5px;height:27.5px;line-height:27.3px;">4</div>
<div class="co" style="left:832.75px;top:297.25px;width:27.5px;height:27.5px;line-height:27.3px;">5</div>
<div class="co" style="left:831.75px;top:163.55px;width:27.5px;height:27.5px;line-height:27.3px;">6</div>
<div class="co" style="left:1154.45px;top:117.65px;width:27.5px;height:27.5px;line-height:27.3px;">7</div>
</body></html>
